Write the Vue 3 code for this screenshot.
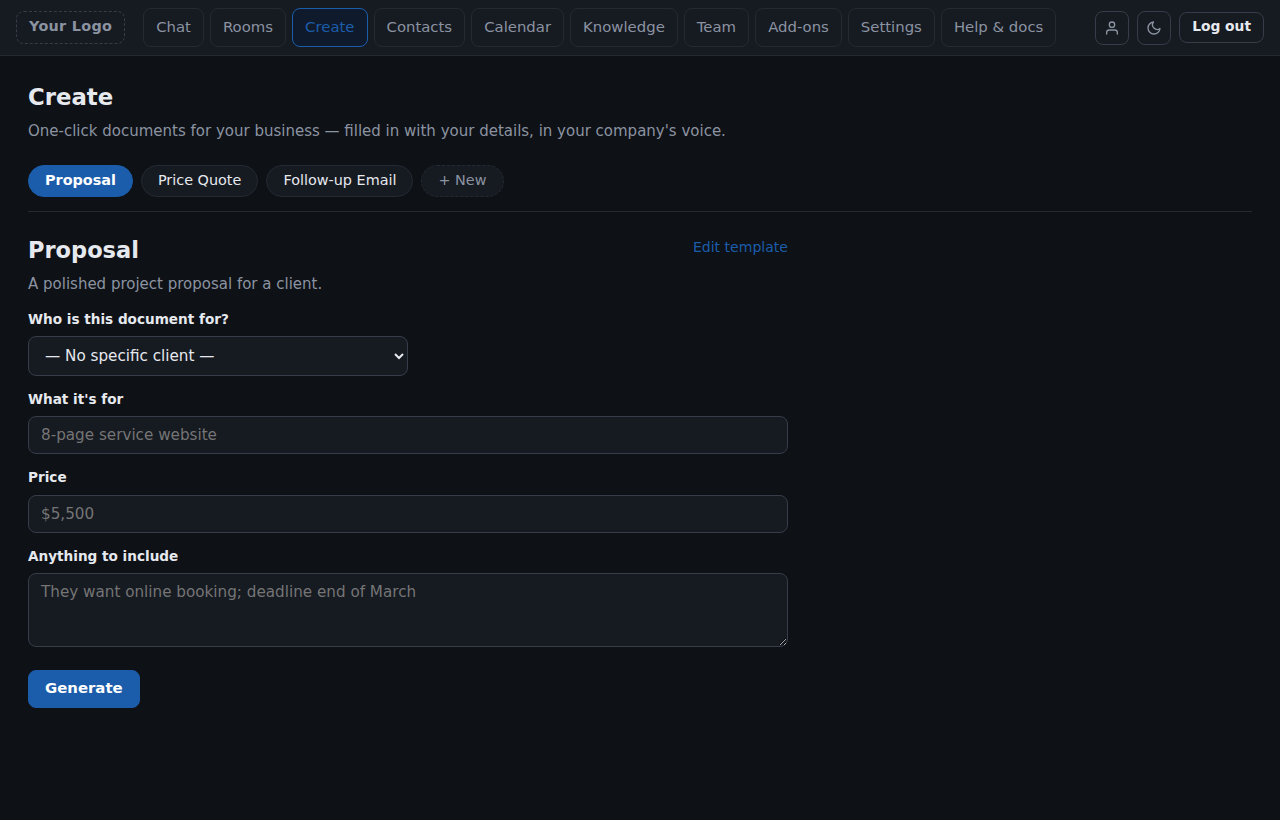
<template>
  <div class="page">
    <header class="topbar">
      <div class="logo">Your Logo</div>
      <nav class="nav">
        <a v-for="item in navItems" :key="item" class="nav-link" :class="{ active: item === 'Create' }">{{ item }}</a>
      </nav>
      <div class="actions">
        <button class="icon-btn" aria-label="Account">
          <svg width="16" height="16" viewBox="0 0 24 24" fill="none" stroke="currentColor" stroke-width="2" stroke-linecap="round" stroke-linejoin="round">
            <path d="M20 21v-2a4 4 0 0 0-4-4H8a4 4 0 0 0-4 4v2" />
            <circle cx="12" cy="7" r="4" />
          </svg>
        </button>
        <button class="icon-btn" aria-label="Theme">
          <svg width="16" height="16" viewBox="0 0 24 24" fill="none" stroke="currentColor" stroke-width="2" stroke-linecap="round" stroke-linejoin="round">
            <path d="M21 12.79A9 9 0 1 1 11.21 3 7 7 0 0 0 21 12.79z" />
          </svg>
        </button>
        <button class="logout">Log out</button>
      </div>
    </header>

    <main class="main">
      <h1>Create</h1>
      <p class="muted intro">One-click documents for your business — filled in with your details, in your company's voice.</p>

      <div class="tabs">
        <button
          v-for="doc in docs"
          :key="doc"
          class="tab"
          :class="{ active: doc === current }"
          @click="current = doc"
        >{{ doc }}</button>
        <button class="tab new">+ New</button>
      </div>

      <section class="doc">
        <div class="doc-head">
          <h2>{{ current }}</h2>
          <a class="edit">Edit template</a>
        </div>
        <p class="muted desc">A polished project proposal for a client.</p>

        <form @submit.prevent>
          <label for="client">Who is this document for?</label>
          <select id="client" v-model="client">
            <option value="">— No specific client —</option>
          </select>

          <label for="what">What it's for</label>
          <input id="what" v-model="what" type="text" placeholder="8-page service website">

          <label for="price" class="price-label">Price</label>
          <input id="price" v-model="price" type="text" placeholder="$5,500">

          <label for="notes">Anything to include</label>
          <textarea id="notes" v-model="notes" placeholder="They want online booking; deadline end of March"></textarea>

          <button class="generate" type="submit">Generate</button>
        </form>
      </section>
    </main>
  </div>
</template>

<script setup>
import { ref } from 'vue';

const navItems = ['Chat', 'Rooms', 'Create', 'Contacts', 'Calendar', 'Knowledge', 'Team', 'Add-ons', 'Settings', 'Help & docs'];
const docs = ['Proposal', 'Price Quote', 'Follow-up Email'];

const current = ref('Proposal');
const client = ref('');
const what = ref('');
const price = ref('');
const notes = ref('');
</script>

<style>
body {
  background: #0e1116;
}
</style>

<style scoped>
.page {
  min-height: 100vh;
  box-sizing: border-box;
  background: #0e1116;
  color: #e6e9ee;
  font-family: "DejaVu Sans", sans-serif;
  font-size: 16px;
  line-height: 1.55;
  color-scheme: dark;
}

.page * {
  box-sizing: border-box;
}

button,
input,
select,
textarea {
  font-family: inherit;
}

.topbar {
  display: flex;
  align-items: center;
  height: 56px;
  padding: 0 16px;
  background: #161a21;
  border-bottom: 1px solid #242932;
}

.logo {
  margin-right: 18px;
  padding: 3px 12px 5px;
  border: 1px dashed #363d49;
  border-radius: 8px;
  color: #8b93a1;
  font-size: 14.4px;
  font-weight: 700;
  letter-spacing: 0.02em;
  white-space: nowrap;
}

.nav {
  display: flex;
  gap: 6px;
}

.nav-link {
  padding: 7px 12px;
  border: 1px solid #242932;
  border-radius: 8px;
  color: #8b93a1;
  font-size: 14.88px;
  line-height: 23px;
  white-space: nowrap;
}

.nav-link.active {
  border-color: #1b5dab;
  background: #0f1b2c;
  color: #1b5dab;
}

.actions {
  display: flex;
  align-items: center;
  gap: 8px;
  margin-left: auto;
}

.icon-btn {
  display: flex;
  align-items: center;
  justify-content: center;
  width: 34px;
  height: 34px;
  margin-top: 1px;
  padding: 0;
  border: 1px solid #363d49;
  border-radius: 8px;
  background: transparent;
  color: #8b93a1;
}

.logout {
  padding: 5px 12px 8px;
  border: 1px solid #363d49;
  border-radius: 8px;
  background: transparent;
  color: #e6e9ee;
  font-size: 13.8px;
  font-weight: 700;
}

.main {
  padding: 24px 28px;
}

h1,
h2 {
  margin: 0;
  font-size: 22.8px;
  line-height: 34px;
}

h2 {
  font-size: 22.5px;
}

.muted {
  margin: 0;
  color: #8b93a1;
  font-size: 15px;
  line-height: 24px;
}

.intro {
  margin-top: 5px;
  margin-bottom: 22px;
}

.tabs {
  display: flex;
  gap: 8px;
  padding-bottom: 14px;
  border-bottom: 1px solid #242932;
}

.tab {
  height: 32px;
  padding: 0 16px 2px;
  border: 1px solid #242932;
  border-radius: 999px;
  background: #161a21;
  color: #e6e9ee;
  font-size: 14.4px;
}

.tab.active {
  border-color: #1b5dab;
  background: #1b5dab;
  color: #fff;
  font-weight: 700;
}

.tab.new {
  border-style: dashed;
  color: #8b93a1;
}

.doc {
  max-width: 760px;
  padding-top: 21px;
}

.doc-head {
  display: flex;
  justify-content: space-between;
}

.edit {
  margin-top: 4px;
  color: #1b5dab;
  font-size: 14.05px;
}

.desc {
  margin-top: 5px;
  margin-bottom: 13px;
}

form {
  display: flex;
  flex-direction: column;
  align-items: flex-start;
}

label {
  margin-bottom: 6px;
  font-size: 13.6px;
  font-weight: 700;
  line-height: 21px;
}

.price-label {
  margin-bottom: 7px;
}

input,
select,
textarea {
  width: 100%;
  margin: 0 0 13px;
  padding: 9px 12px;
  border: 1px solid #363d49;
  border-radius: 8px;
  background: #161a21;
  color: #e6e9ee;
  font-size: 15.2px;
}

input {
  height: 38px;
}

select {
  width: 380px;
  height: 40px;
}

textarea {
  height: 74px;
  margin-bottom: 23px;
  resize: vertical;
}

.generate {
  padding: 9px 16px 10px;
  border: 1px solid #1b5dab;
  border-radius: 8px;
  background: #1b5dab;
  color: #fff;
  font-size: 14.9px;
  font-weight: 700;
  line-height: 17px;
}
</style>
